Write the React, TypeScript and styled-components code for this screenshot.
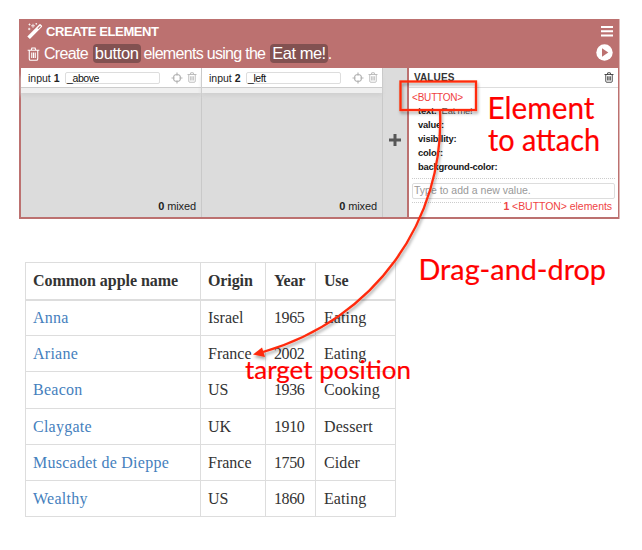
import React from 'react';
import styled, { createGlobalStyle } from 'styled-components';

const GlobalStyle = createGlobalStyle`
  * { box-sizing: border-box; }
  body { margin: 0; background: #fff; overflow: hidden; }
`;

const Page = styled.main`
  position: relative;
  width: 642px;
  height: 550px;
  padding: 19px 0 0 19px;
  background: #fff;
  font-family: "Liberation Sans", Arial, sans-serif;
`;

const Widget = styled.section`
  display: flex;
  flex-direction: column;
  width: 601px;
  height: 200px;
  background: #bc7170;
  border-right: 1px solid #dfb9b8;
`;

const Header = styled.header`
  height: 49px;
  padding: 3px 6px 0 8px;
  color: #fff;
`;

const TitleRow = styled.div`
  display: flex;
  align-items: center;
  height: 19px;
`;

const Title = styled.h1`
  flex: 1;
  margin: 0 0 0 3px;
  font-size: 13px;
  line-height: 19px;
  letter-spacing: -0.4px;
`;

const SentenceRow = styled.div`
  display: flex;
  align-items: flex-start;
  height: 24px;
  padding-top: 3px;
  > svg:first-child { margin-top: 3px; }
`;

const Sentence = styled.p`
  display: flex;
  flex: 1;
  align-items: center;
  margin: 0 0 0 4px;
  font-size: 16px;
  line-height: 19px;
  letter-spacing: -0.7px;
  white-space: pre;
`;

const Token = styled.span<{ $spacing: number }>`
  height: 19px;
  margin: 0 3px 0 5px;
  padding: 0 2px;
  border-radius: 4px;
  background: #825151;
  font-size: 16.5px;
  letter-spacing: ${(p) => p.$spacing}px;
  &:last-of-type { margin-right: 0; }
`;

const Panels = styled.div`
  display: flex;
  height: 149px;
  margin: 0 1px 0 2px;
  background: #dcdcdc;
`;

const InputPanel = styled.div`
  display: flex;
  flex-direction: column;
  justify-content: space-between;
  width: 181px;
  border-right: 1px solid #c9c9c9;
`;

const InputHeader = styled.div`
  display: flex;
  align-items: center;
  height: 20px;
  padding: 0 4px 0 7px;
  background: #fff;
  border-bottom: 1px solid #ccc;
  box-shadow: 0 5px 0 #efefef, 0 8px 4px #d0d0d0;
  font-size: 10.5px;
  color: #222;
`;

const InputLabel = styled.span`
  width: 37px;
  white-space: pre;
`;

const NameField = styled.span`
  width: 95px;
  height: 12px;
  padding-left: 1px;
  border: 1px solid #ddd;
  border-radius: 2px;
  font-size: 10.5px;
  line-height: 10px;
  letter-spacing: -0.4px;
  color: #111;
`;

const HeaderIcons = styled.span`
  display: flex;
  flex: 1;
  align-items: center;
  justify-content: flex-end;
  gap: 4px;
`;

const Count = styled.div`
  padding: 0 5px 4px 0;
  font-size: 11px;
  line-height: 13px;
  letter-spacing: -0.1px;
  text-align: right;
  color: #1d1d1d;
`;

const AddStrip = styled.div`
  display: flex;
  align-items: center;
  justify-content: center;
  flex: 1;
  padding-bottom: 6px;
`;

const ValuesPanel = styled.div`
  display: flex;
  flex-direction: column;
  width: 211px;
  border-left: 2px solid #bc7170;
  background: #fff;
`;

const ValuesHeader = styled.div`
  display: flex;
  align-items: center;
  justify-content: space-between;
  height: 20px;
  padding: 0 4px 0 5px;
  border-bottom: 1px solid #ddd;
  font-size: 10px;
  font-weight: bold;
  letter-spacing: 0.1px;
  color: #333;
`;

const TagName = styled.div`
  padding: 4px 0 0 3px;
  height: 16px;
  font-size: 10px;
  line-height: 11px;
  letter-spacing: -0.2px;
  color: #ef4141;
`;

const Attribute = styled.div`
  height: 14px;
  padding-left: 9px;
  font-size: 9.4px;
  line-height: 14px;
  letter-spacing: -0.2px;
  white-space: pre;
  color: #555;
  b { color: #161616; }
`;

const NewValue = styled.div`
  height: 25px;
  margin: 4px 3px 0;
  padding-top: 4px;
  border-top: 1px dotted #ccc;
  border-bottom: 1px dotted #ccc;
`;

const NewValueField = styled.div`
  height: 16px;
  padding-left: 1px;
  border: 1px solid #ddd;
  border-radius: 2px;
  font-size: 10.5px;
  line-height: 13px;
  color: #999;
`;

const ElementCount = styled.div`
  align-self: flex-end;
  z-index: 1;
  margin-top: -4px;
  padding: 0 6px 0 2px;
  background: #fff;
  font-size: 10.5px;
  line-height: 14px;
  letter-spacing: -0.05px;
  color: #ef4444;
`;

const AppleTable = styled.table`
  width: 371px;
  margin: 43px 0 0 6px;
  border-collapse: collapse;
  table-layout: fixed;
  font-family: "Liberation Serif", "Times New Roman", serif;
  font-size: 16px;
  color: #333;
`;

const HeadCell = styled.th<{ $width: number; $spacing: number; $inset: number }>`
  width: ${(p) => p.$width}px;
  height: 37px;
  padding: 1px 0 0 ${(p) => p.$inset}px;
  border: 1px solid #ddd;
  border-bottom: 2px solid #ddd;
  text-align: left;
  white-space: nowrap;
  line-height: 20px;
  letter-spacing: ${(p) => p.$spacing}px;
`;

const Cell = styled.td<{ $link: boolean; $spacing: number; $inset: number }>`
  height: 36.2px;
  padding: 1px 0 0 ${(p) => p.$inset}px;
  border: 1px solid #ddd;
  line-height: 20px;
  white-space: nowrap;
  letter-spacing: ${(p) => p.$spacing}px;
  color: ${(p) => (p.$link ? '#4580bd' : '#333')};
`;

const Annotations = styled.svg`
  position: absolute;
  inset: 0;
  pointer-events: none;
`;

const Note = styled.text`
  font-family: Lato, "Open Sans", sans-serif;
  fill: #ff0000;
  stroke: #ff0000;
  stroke-width: 0.2px;
`;

const Trash = ({ size, color }: { size: number; color: string }) => (
  <svg width={size} height={size * 1.1} viewBox="0 0 20 22" fill="none" stroke={color} strokeWidth="1.7">
    <path d="M1 5h18M6.5 5l1-3.5h5l1 3.5M3.5 5v13.5q0 2 2 2h9q2 0 2-2V5M7.3 8.5v8.5M10 8.5v8.5M12.7 8.5v8.5" />
  </svg>
);

const Target = () => (
  <svg width="12" height="12" viewBox="0 0 12 12" fill="none" stroke="#b5b5b5" strokeWidth="1.2">
    <circle cx="6" cy="6" r="3.5" />
    <path d="M6 .5v3.2M6 8.3v3.2M.5 6h3.2M8.3 6h3.2" />
  </svg>
);

const Wand = () => (
  <svg width="16" height="17" viewBox="0 0 16 17" fill="none" stroke="#fff">
    <path d="M.3 13.4L12.2 1.5q.8-.8 1.6 0l1 1q.8.8 0 1.6L2.9 16z" fill="#fff" stroke="none" />
    <path d="M10.5 5.3l2.600-2.600.8.8-2.600 2.600z" fill="#bc7170" stroke="none" />
    <path d="M6 .8v4M4 2.8h4M2.500.5v2M1.500 1.500h2M2.200 4.800v2.400M1 6h2.400M9.300 0v1.600M8.500.8h1.600" strokeWidth=".8" />
  </svg>
);

const Menu = () => (
  <svg width="12" height="11" viewBox="0 0 12 11" fill="#fff">
    <path d="M0 0h12v2H0zM0 4.2h12v2H0zM0 8.4h12v2H0z" />
  </svg>
);

const Play = () => (
  <svg width="17" height="17" viewBox="0 0 17 17">
    <circle cx="8.5" cy="8.5" r="8.2" fill="#fff" />
    <path d="M6 4.3l6.3 4.2L6 12.7z" fill="#bc7170" />
  </svg>
);

const Plus = () => (
  <svg width="12" height="12" viewBox="0 0 12 12" fill="#575757">
    <path d="M4.5 0h3v4.5H12v3H7.5V12h-3V7.5H0v-3h4.5z" />
  </svg>
);

const columns = [
  { label: 'Common apple name', width: 175, inset: 7, headSpacing: -0.04, spacing: 0.25 },
  { label: 'Origin', width: 65, inset: 7, headSpacing: -0.1, spacing: 0 },
  { label: 'Year', width: 50, inset: 8, headSpacing: -0.2, spacing: -0.4 },
  { label: 'Use', width: 80, inset: 8, headSpacing: -0.2, spacing: 0.1 },
];

const apples = [
  ['Anna', 'Israel', '1965', 'Eating'],
  ['Ariane', 'France', '2002', 'Eating'],
  ['Beacon', 'US', '1936', 'Cooking'],
  ['Claygate', 'UK', '1910', 'Dessert'],
  ['Muscadet de Dieppe', 'France', '1750', 'Cider'],
  ['Wealthy', 'US', '1860', 'Eating'],
];

const inputs = [
  { index: 1, name: '_above' },
  { index: 2, name: '_left' },
];

export default function App() {
  return (
    <Page>
      <GlobalStyle />
      <Widget>
        <Header>
          <TitleRow>
            <Wand />
            <Title>CREATE ELEMENT</Title>
            <Menu />
          </TitleRow>
          <SentenceRow>
            <Trash size={13} color="#fff" />
            <Sentence>
              Create<Token $spacing={-0.35}>button</Token>elements using the<Token $spacing={-0.5}>Eat me!</Token>.
            </Sentence>
            <Play />
          </SentenceRow>
        </Header>
        <Panels>
          {inputs.map((input) => (
            <InputPanel key={input.index}>
              <InputHeader>
                <InputLabel>input <b>{input.index}</b></InputLabel>
                <NameField>{input.name}</NameField>
                <HeaderIcons>
                  <Target />
                  <Trash size={10} color="#b5b5b5" />
                </HeaderIcons>
              </InputHeader>
              <Count><b>0</b> mixed</Count>
            </InputPanel>
          ))}
          <AddStrip><Plus /></AddStrip>
          <ValuesPanel>
            <ValuesHeader>VALUES<Trash size={10} color="#333" /></ValuesHeader>
            <TagName>&lt;BUTTON&gt;</TagName>
            <Attribute><b>text:</b>  Eat me!</Attribute>
            <Attribute><b>value:</b></Attribute>
            <Attribute><b>visibility:</b></Attribute>
            <Attribute><b>color:</b></Attribute>
            <Attribute><b>background-color:</b></Attribute>
            <NewValue><NewValueField>Type to add a new value.</NewValueField></NewValue>
            <ElementCount><b>1</b> &lt;BUTTON&gt; elements</ElementCount>
          </ValuesPanel>
        </Panels>
      </Widget>

      <AppleTable>
        <thead>
          <tr>
            {columns.map((c) => (
              <HeadCell key={c.label} $width={c.width} $spacing={c.headSpacing} $inset={c.inset}>{c.label}</HeadCell>
            ))}
          </tr>
        </thead>
        <tbody>
          {apples.map((row) => (
            <tr key={row[0]}>
              {row.map((value, i) => (
                <Cell key={i} $link={i === 0} $spacing={columns[i].spacing} $inset={columns[i].inset}>{value}</Cell>
              ))}
            </tr>
          ))}
        </tbody>
      </AppleTable>

      <Annotations width="642" height="550" viewBox="0 0 642 550">
        <defs>
          <filter id="shadow" filterUnits="userSpaceOnUse" x="230" y="70" width="270" height="310">
            <feDropShadow dx="1" dy="2.5" stdDeviation="1.5" floodColor="#000" floodOpacity="0.35" />
          </filter>
        </defs>
        <g filter="url(#shadow)" fill="none" stroke="#ff2a0a" strokeWidth="2.3">
          <rect x="400.5" y="81.5" width="75.5" height="28.5" />
          <path d="M440 110C445 220 375 320 263 352" />
          <path d="M253 354.500L262 347.500L265 357z" fill="#ff2a0a" stroke="none" />
        </g>
        <Note x="487.5" y="119" fontSize="30" textLength="107" lengthAdjust="spacingAndGlyphs">Element</Note>
        <Note x="488" y="151" fontSize="30" textLength="112" lengthAdjust="spacingAndGlyphs">to attach</Note>
        <Note x="418.5" y="280" fontSize="28" textLength="187.5" lengthAdjust="spacingAndGlyphs">Drag-and-drop</Note>
        <Note x="245" y="379" fontSize="25" textLength="166" lengthAdjust="spacingAndGlyphs">target position</Note>
      </Annotations>
    </Page>
  );
}
